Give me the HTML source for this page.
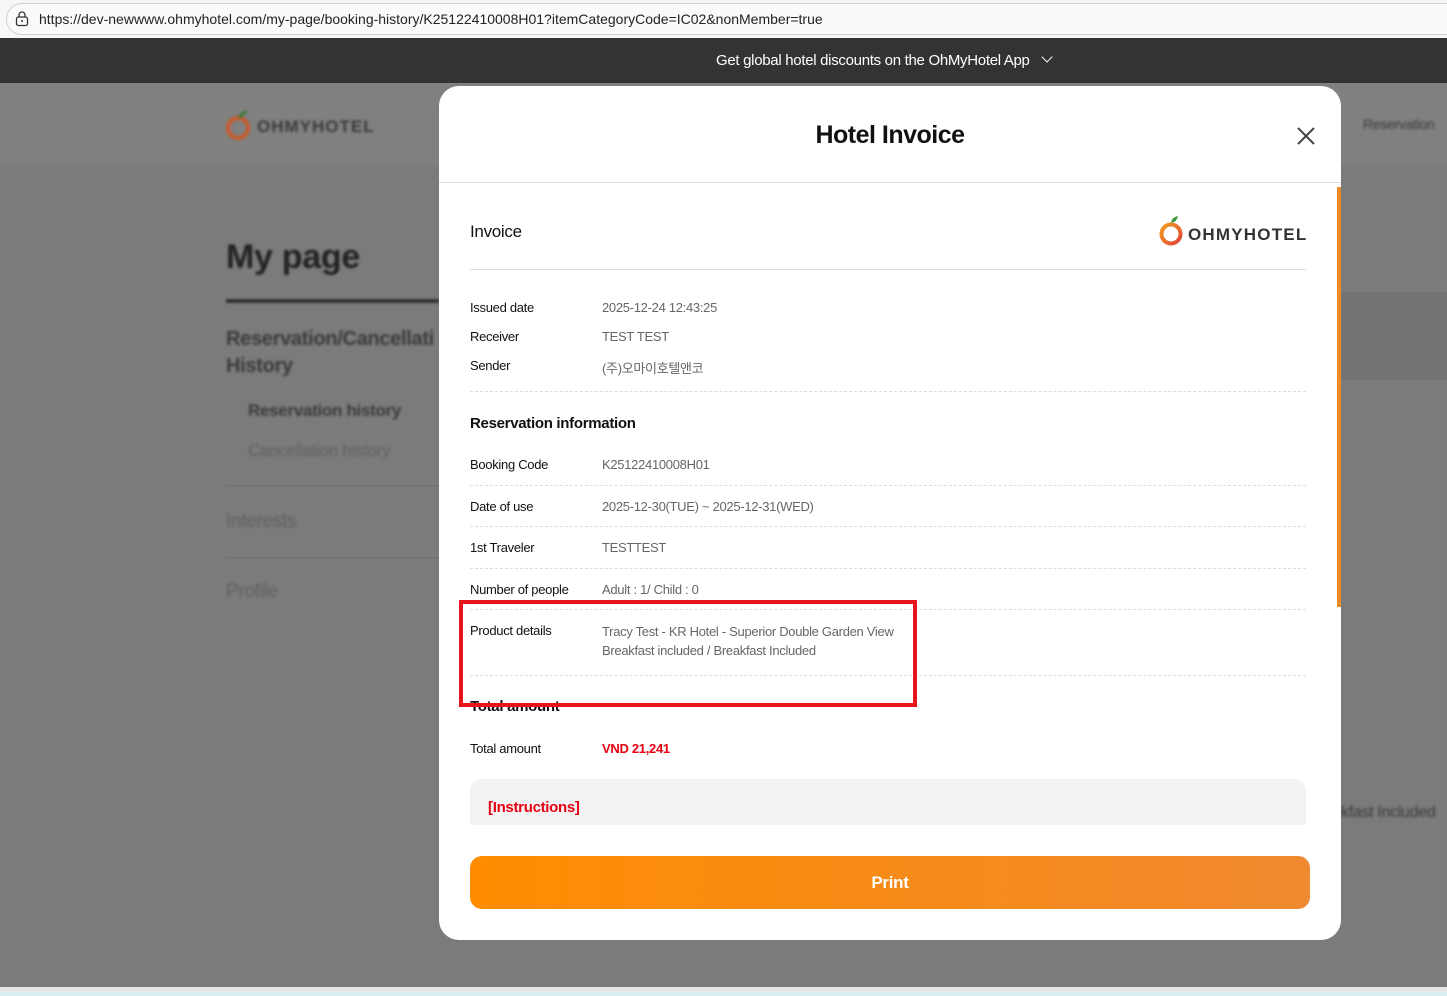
<!DOCTYPE html>
<html><head><meta charset="utf-8"><style>
*{margin:0;padding:0;box-sizing:border-box}
body{width:1447px;height:996px;overflow:hidden;background:#7b7b7b;font-family:"Liberation Sans","Noto Sans CJK KR",sans-serif;position:relative;letter-spacing:-0.3px}
.abs{position:absolute}
.bar{left:0;top:0;width:1447px;height:38px;background:#f7f7f7}
.url{left:6px;top:3px;width:1460px;height:32px;border:1px solid #d0d0d0;border-radius:16px;background:#fafafa;font-size:14px;color:#222;padding:7px 0 0 32px;letter-spacing:0}
.dark{left:0;top:38px;width:1447px;height:45px;background:#333;color:#fff;font-size:15px;line-height:45px;padding-left:716px}
.hdr{left:0;top:83px;width:1447px;height:82px;background:#808080}
.blur{filter:blur(1.2px);color:#3a3a3a}
.modal{left:439px;top:86px;width:902px;height:854px;background:#fff;border-radius:20px;overflow:hidden}
.lbl{position:absolute;left:31px;font-size:13px;color:#111}
.val{position:absolute;left:163px;font-size:13px;color:#666}
.dash{position:absolute;left:31px;width:836px;border-top:1px dashed #ddd}
</style></head><body>
<div class="abs bar"></div>
<div class="abs url">https://dev-newwww.ohmyhotel.com/my-page/booking-history/K25122410008H01?itemCategoryCode=IC02&amp;nonMember=true</div>
<svg class="abs" style="left:15px;top:11px" width="14" height="16"><rect x="1.5" y="6" width="11" height="8.5" rx="2" fill="none" stroke="#333" stroke-width="1.3"/><path d="M4 6V4a3 3 0 016 0v2" fill="none" stroke="#333" stroke-width="1.3"/><circle cx="7" cy="10" r="1" fill="#333"/></svg>
<div class="abs dark">Get global hotel discounts on the OhMyHotel App <span style="display:inline-block;width:8px;height:8px;border-right:1.5px solid #fff;border-bottom:1.5px solid #fff;transform:rotate(45deg);margin:0 0 4px 10px"></span></div>
<div class="abs hdr"></div>
<div class="abs blur" style="left:226px;top:108px"><svg width="30" height="36"><circle cx="12" cy="20" r="10" fill="none" stroke="#c85a2a" stroke-width="4"/><path d="M14 10q2-6 7-6" stroke="#3a7a3a" stroke-width="3" fill="none"/></svg></div>
<div class="abs blur" style="left:257px;top:117px;font-weight:bold;font-size:17px;letter-spacing:1px">OHMYHOTEL</div>
<div class="abs blur" style="left:1363px;top:116px;font-size:14px">Reservation</div>
<div class="abs blur" style="left:226px;top:238px;font-size:34px;font-weight:bold;color:#222">My page</div>
<div class="abs" style="left:226px;top:299px;width:213px;height:4px;background:#333;filter:blur(1px)"></div>
<div class="abs blur" style="left:226px;top:326px;font-size:20px;font-weight:bold;line-height:27px">Reservation/Cancellati<br>History</div>
<div class="abs blur" style="left:248px;top:401px;font-size:17px;font-weight:bold">Reservation history</div>
<div class="abs blur" style="left:248px;top:441px;font-size:17px;color:#606060">Cancellation history</div>
<div class="abs" style="left:226px;top:485px;width:213px;border-top:1px solid #707070"></div>
<div class="abs blur" style="left:226px;top:511px;font-size:19px;color:#606060">Interests</div>
<div class="abs" style="left:226px;top:557px;width:213px;border-top:1px solid #707070"></div>
<div class="abs blur" style="left:226px;top:581px;font-size:19px;color:#606060">Profile</div>
<div class="abs" style="left:1341px;top:292px;width:106px;height:88px;background:#747474"></div>
<div class="abs blur" style="left:1341px;top:804px;font-size:16px">kfast Included</div>
<div class="abs" style="left:0;top:987px;width:1447px;height:5px;background:#e6e6e6"></div>
<div class="abs" style="left:0;top:992px;width:1447px;height:4px;background:#d7efef"></div>

<div class="abs modal">
<div class="abs" style="left:0;top:35px;width:902px;text-align:center;font-size:25px;font-weight:bold;color:#111;letter-spacing:-0.5px">Hotel Invoice</div>
<svg class="abs" style="left:857px;top:40px" width="20" height="20"><path d="M2 2L18 18M18 2L2 18" stroke="#444" stroke-width="2"/></svg>
<div class="abs" style="left:0;top:96px;width:902px;border-top:1px solid #ddd"></div>
<div class="abs" style="left:898px;top:101px;width:4px;height:420px;background:#f08a24"></div>
<div class="lbl" style="top:136px;font-size:17px">Invoice</div>
<svg class="abs" style="left:718px;top:127px" width="28" height="34"><defs><linearGradient id="g" x1="0" y1="0" x2="1" y2="1"><stop offset="0" stop-color="#f39a1e"/><stop offset="1" stop-color="#e0463a"/></linearGradient></defs><circle cx="14" cy="21" r="9.5" fill="none" stroke="url(#g)" stroke-width="4"/><path d="M14 10q1-6 7-7q-1 6-7 7z" fill="#3a9a3a"/></svg>
<div class="abs" style="left:749px;top:139px;font-size:17px;font-weight:bold;color:#333;letter-spacing:1.2px">OHMYHOTEL</div>
<div class="abs" style="left:31px;top:183px;width:836px;border-top:1px solid #ddd"></div>
<div class="lbl" style="top:214px">Issued date</div><div class="val" style="top:214px">2025-12-24 12:43:25</div>
<div class="lbl" style="top:243px">Receiver</div><div class="val" style="top:243px">TEST TEST</div>
<div class="lbl" style="top:272px">Sender</div><div class="val" style="top:272px">(주)오마이호텔앤코</div>
<div class="dash" style="top:305px"></div>
<div class="lbl" style="top:329px;font-size:15px;font-weight:bold">Reservation information</div>
<div class="lbl" style="top:371px">Booking Code</div><div class="val" style="top:371px">K25122410008H01</div>
<div class="dash" style="top:399px"></div>
<div class="lbl" style="top:413px">Date of use</div><div class="val" style="top:413px">2025-12-30(TUE) ~ 2025-12-31(WED)</div>
<div class="dash" style="top:440px"></div>
<div class="lbl" style="top:454px">1st Traveler</div><div class="val" style="top:454px">TESTTEST</div>
<div class="dash" style="top:482px"></div>
<div class="lbl" style="top:496px">Number of people</div><div class="val" style="top:496px">Adult : 1/ Child : 0</div>
<div class="dash" style="top:523px"></div>
<div class="lbl" style="top:537px">Product details</div><div class="val" style="top:536px;line-height:19px">Tracy Test - KR Hotel - Superior Double Garden View<br>Breakfast included / Breakfast Included</div>
<div class="dash" style="top:589px"></div>
<div class="lbl" style="top:612px;font-size:15px;font-weight:bold">Total amount</div>
<div class="lbl" style="top:655px">Total amount</div><div class="val" style="top:655px;color:#e60012;font-weight:bold">VND 21,241</div>
<div class="abs" style="left:31px;top:693px;width:836px;height:46px;background:#f3f3f3;border-radius:12px 12px 0 0"></div>
<div class="abs" style="left:49px;top:713px;font-size:15px;font-weight:bold;color:#e60012">[Instructions]</div>
<div class="abs" style="left:31px;top:770px;width:840px;height:53px;border-radius:12px;background:linear-gradient(90deg,#ff8c00,#f08a30);color:#fff;font-weight:bold;font-size:17px;text-align:center;line-height:53px">Print</div>
</div>
<div class="abs" style="left:459px;top:600px;width:458px;height:107px;border:4px solid #e8141c"></div>
</body></html>
